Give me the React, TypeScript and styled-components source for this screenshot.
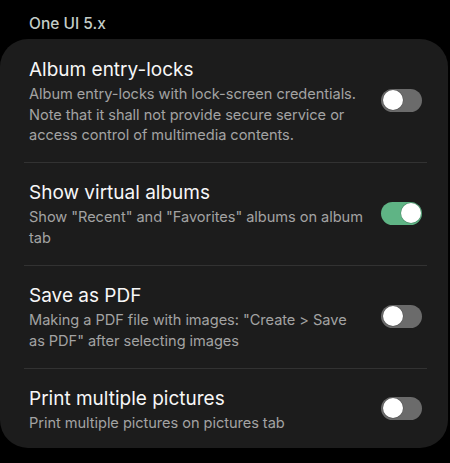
import React, { useState } from "react";
import styled, { createGlobalStyle } from "styled-components";

const Global = createGlobalStyle`
  html, body { margin: 0; padding: 0; background: #000; }
  body { font-family: Inter, Roboto, "Noto Sans", sans-serif; -webkit-font-smoothing: antialiased; }
`;

const Page = styled.div`
  width: 450px;
  height: 463px;
  background: #000;
  overflow: hidden;
  display: flex;
  flex-direction: column;
`;

const Header = styled.div`
  padding: 14px 29px 0;
  height: 25px;
  font-size: 15.5px;
  line-height: 20px;
  font-weight: 500;
  color: #c3ccc7;
`;

const Card = styled.div`
  width: 448px;
  background: #1c1c1c;
  border-radius: 28px;
  display: flex;
  flex-direction: column;
  padding: 1px 0 0;
  box-sizing: border-box;
`;

const Row = styled.div<{ $last?: boolean }>`
  margin: 0 21px 0 24px;
  padding: 15px 0 ${(p) => (p.$last ? "14.5px" : "16.5px")} 5px;
  display: flex;
  align-items: center;
  gap: 15px;
  border-bottom: ${(p) => (p.$last ? "none" : "1px solid #323232")};
`;

const Texts = styled.div`
  flex: 1;
  min-width: 0;
`;

const Title = styled.div`
  font-size: 19px;
  line-height: 29px;
  color: #f7f7f7;
`;

const Desc = styled.div`
  font-size: 14.6px;
  line-height: 20.6px;
  letter-spacing: -0.05px;
  color: #a3a3a3;
`;

const Track = styled.button<{ $on: boolean }>`
  flex: none;
  width: 41px;
  height: 23px;
  border-radius: 12px;
  border: none;
  padding: 0;
  margin-right: 5px;
  background: ${(p) => (p.$on ? "#5fb485" : "#6b6b6b")};
  position: relative;
  cursor: pointer;
`;

const Knob = styled.span<{ $on: boolean }>`
  position: absolute;
  top: 1.5px;
  left: ${(p) => (p.$on ? "19.5px" : "1.5px")};
  width: 20px;
  height: 20px;
  border-radius: 50%;
  background: #fff;
  box-shadow: 0 0 0 0.5px rgba(0, 0, 0, 0.25);
`;

const items = [
  {
    title: "Album entry-locks",
    desc: "Album entry-locks with lock-screen credentials. Note that it shall not provide secure service or access control of multimedia contents.",
    on: false,
  },
  {
    title: "Show virtual albums",
    desc: 'Show "Recent" and "Favorites" albums on album tab',
    on: true,
  },
  {
    title: "Save as PDF",
    desc: 'Making a PDF file with images: "Create > Save as PDF" after selecting images',
    on: false,
  },
  {
    title: "Print multiple pictures",
    desc: "Print multiple pictures on pictures tab",
    on: false,
  },
];

export default function App() {
  const [state, setState] = useState(items.map((i) => i.on));
  return (
    <Page>
      <Global />
      <Header>One UI 5.x</Header>
      <Card>
        {items.map((it, i) => (
          <Row key={it.title} $last={i === items.length - 1}>
            <Texts>
              <Title>{it.title}</Title>
              <Desc>{it.desc}</Desc>
            </Texts>
            <Track
              $on={state[i]}
              onClick={() => setState((s) => s.map((v, j) => (j === i ? !v : v)))}
            >
              <Knob $on={state[i]} />
            </Track>
          </Row>
        ))}
      </Card>
    </Page>
  );
}
